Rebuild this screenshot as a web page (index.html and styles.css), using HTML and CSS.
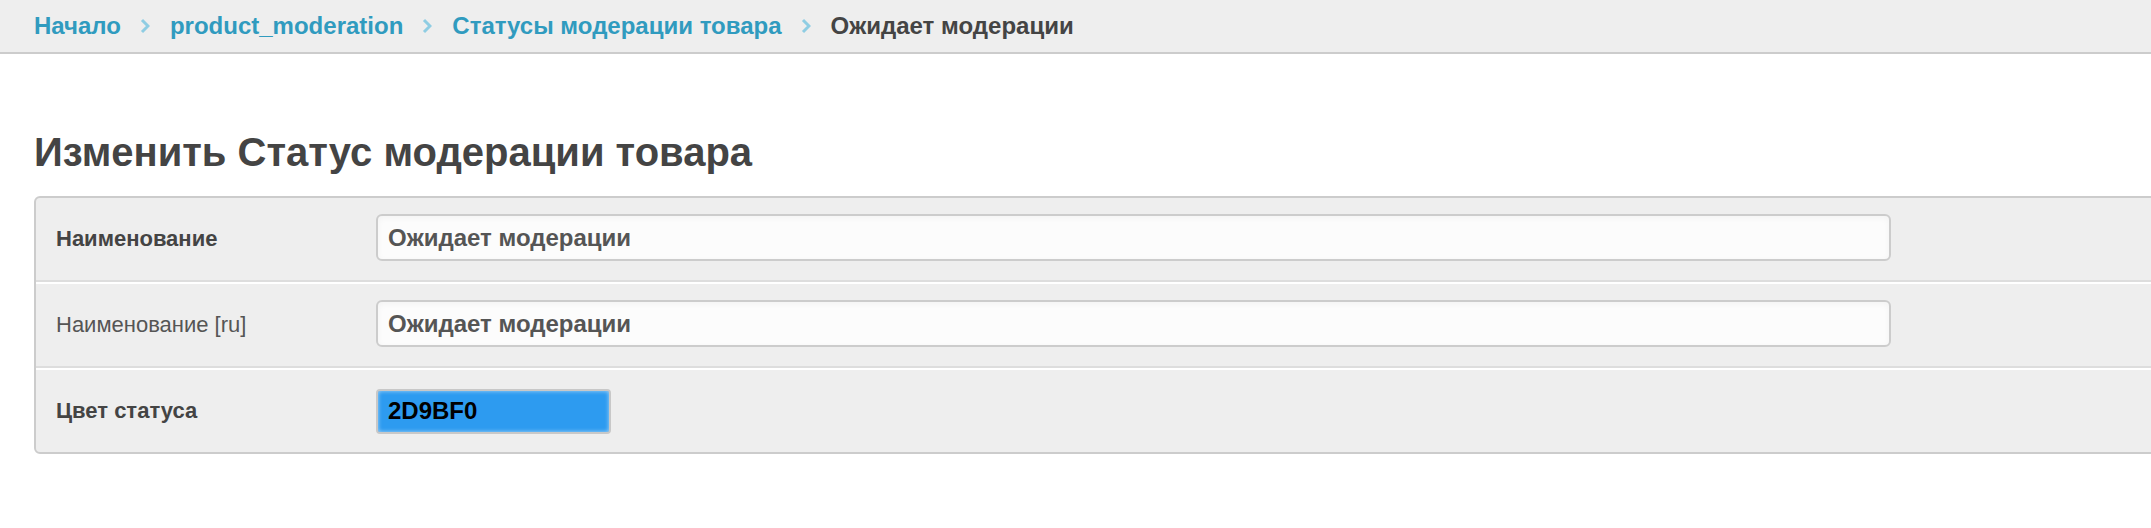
FILE: index.html
```html
<!DOCTYPE html>
<html lang="ru">
<head>
    <meta charset="UTF-8">
    <title>Изменить Статус модерации товара</title>
    <link rel="stylesheet" href="styles.css">
</head>
<body>
    <div class="breadcrumbs">
        <a href="#">Начало</a>
        <svg class="sep" width="10" height="16" viewBox="0 0 10 16"><polyline points="2,2 8,8 2,14" /></svg>
        <a href="#">product_moderation</a>
        <svg class="sep" width="10" height="16" viewBox="0 0 10 16"><polyline points="2,2 8,8 2,14" /></svg>
        <a href="#">Статусы модерации товара</a>
        <svg class="sep" width="10" height="16" viewBox="0 0 10 16"><polyline points="2,2 8,8 2,14" /></svg>
        <span class="current">Ожидает модерации</span>
    </div>

    <div class="content">
        <h1>Изменить Статус модерации товара</h1>

        <form class="module">
            <div class="form-row">
                <label class="required">Наименование</label>
                <input class="text" type="text" value="Ожидает модерации">
            </div>
            <div class="form-row">
                <label>Наименование [ru]</label>
                <input class="text" type="text" value="Ожидает модерации">
            </div>
            <div class="form-row">
                <label class="required">Цвет статуса</label>
                <input class="color" type="text" value="2D9BF0">
            </div>
        </form>
    </div>
</body>
</html>
```

FILE: styles.css
```css
html, body {
    overflow: hidden;
}
body {
    margin: 0;
    font-family: "Liberation Sans", Arial, sans-serif;
    color: #444;
    background: #fff;
}
.breadcrumbs {
    display: flex;
    align-items: center;
    height: 52px;
    padding-left: 34px;
    background: #eee;
    border-bottom: 2px solid #ccc;
    font-size: 24px;
    font-weight: bold;
}
.breadcrumbs a {
    color: #309bbf;
    text-decoration: none;
}
.breadcrumbs .current {
    color: #444;
}
.sep {
    margin: 0 20px 0 19px;
    fill: none;
    stroke: #8fcde3;
    stroke-width: 3;
}
.content {
    padding: 0 0 0 34px;
}
h1 {
    margin: 74px 0 20px;
    font-size: 40px;
    line-height: 48px;
    color: #444;
}
.module {
    width: 2200px;
    border: 2px solid #ccc;
    border-radius: 6px;
    background: #eee;
}
.form-row {
    display: flex;
    align-items: center;
    height: 82px;
    padding: 0 20px;
    border-top: 2px solid #fff;
    border-bottom: 2px solid #ddd;
}
.form-row:first-child {
    border-top: none;
}
.form-row:last-child {
    border-bottom: none;
}
.form-row label {
    width: 320px;
    font-size: 22px;
    color: #555;
}
.form-row label.required {
    font-weight: bold;
    color: #444;
}
input.text {
    box-sizing: border-box;
    width: 1515px;
    height: 47px;
    margin-top: -3px;
    padding: 0 10px;
    border: 2px solid #ccc;
    border-radius: 6px;
    background: #fcfcfc;
    box-shadow: inset 0 2px 6px rgba(0,0,0,0.04);
    font-family: inherit;
    font-size: 24px;
    font-weight: bold;
    color: #555;
}
input.color {
    box-sizing: border-box;
    width: 235px;
    height: 45px;
    margin-top: 0;
    padding: 0 10px;
    border: 2px solid #c8c8c8;
    border-radius: 4px;
    background: #2d9bf0;
    box-shadow: inset 0 0 4px rgba(255,255,255,0.6);
    font-family: inherit;
    font-size: 24px;
    font-weight: bold;
    color: #000;
}
```
